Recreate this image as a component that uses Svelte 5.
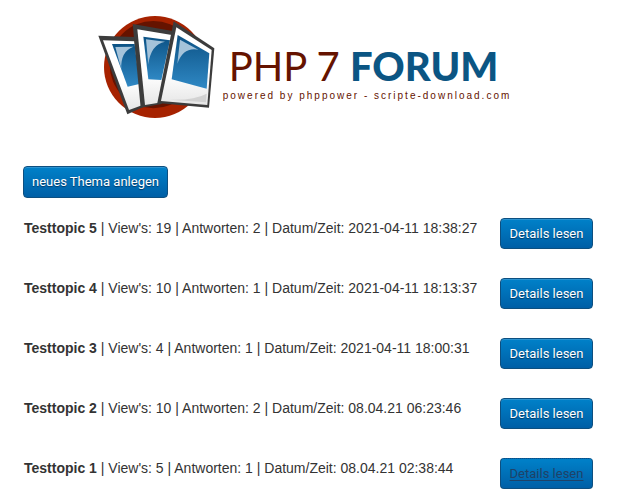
<script lang="ts">
    type Topic = {
        title: string
        views: number
        replies: number
        date: string
    }

    const topics: Topic[] = [
        { title: 'Testtopic 5', views: 19, replies: 2, date: '2021-04-11 18:38:27' },
        { title: 'Testtopic 4', views: 10, replies: 1, date: '2021-04-11 18:13:37' },
        { title: 'Testtopic 3', views: 4, replies: 1, date: '2021-04-11 18:00:31' },
        { title: 'Testtopic 2', views: 10, replies: 2, date: '08.04.21 06:23:46' },
        { title: 'Testtopic 1', views: 5, replies: 1, date: '08.04.21 02:38:44' },
    ]

    let active = 'Testtopic 1'
</script>

<main>
    <header>
        <svg class="logo" viewBox="24 21 351 312" aria-hidden="true">
            <defs>
                <linearGradient id="photo" x1="0" y1="0" x2="0" y2="1">
                    <stop offset="0" stop-color="#0c5285" />
                    <stop offset="1" stop-color="#2f88c4" />
                </linearGradient>
                <linearGradient id="glare" x1="0" y1="0" x2="0.5" y2="1">
                    <stop offset="0" stop-color="#a5c3da" />
                    <stop offset="0.6" stop-color="#a5c3da" />
                    <stop offset="1" stop-color="#5b9bc8" />
                </linearGradient>
                <linearGradient id="paper" x1="0" y1="0" x2="0" y2="1">
                    <stop offset="0.6" stop-color="#ffffff" />
                    <stop offset="1" stop-color="#e6e6e6" />
                </linearGradient>
            </defs>

            <circle cx="195" cy="177" r="153" fill="#a62200" />
            <circle cx="190" cy="170" r="131" fill="#651300" />

            <path d="M25 83 L133 87 L160 297 L112 319 Z" fill="#3c3c3c" />
            <path d="M39 97 L133 100 L156 292 L117 306 Z" fill="url(#paper)" />
            <path d="M66 108 L134 108 L148 228 L113 236 Z" fill="url(#photo)" />
            <path d="M76 117 L130 116 Q91 130 94 184 Z" fill="url(#glare)" />

            <path d="M128 48 L252 70 L215 288 L152 299 Z" fill="#3c3c3c" />
            <path d="M142 64 L250 82 L207 284 L165 291 Z" fill="url(#paper)" />
            <path d="M160 86 L240 97 L214 216 L175 214 Z" fill="url(#photo)" />
            <path d="M168 94 L225 101 Q182 109 175 170 Z" fill="url(#glare)" />

            <path d="M251 40 L373 121 L357 299 L202 285 Z" fill="#3c3c3c" />
            <path d="M259 58 L365 126 L352 291 L213 279 Z" fill="url(#paper)" />
            <path d="M263 81 L358 136 L350 242 L245 214 Z" fill="url(#photo)" />
            <path d="M270 95 L325 125 Q280 116 262 167 Z" fill="url(#glare)" />
            <path d="M240 275 Q310 278 350 257 L348 283 Z" fill="#d2d2d2" />
        </svg>
        <div class="brand">
            <h1>PHP 7 <b>FORUM</b></h1>
            <p>powered by phppower - scripte-download.com</p>
        </div>
    </header>

    <button class="btn new-topic">neues Thema anlegen</button>

    <ul>
        {#each topics as topic}
            <li>
                <span><b>{ topic.title }</b> | View's: { topic.views } | Antworten: { topic.replies } | Datum/Zeit: { topic.date }</span>
                <a class="btn" class:active={ topic.title === active } href="#details">Details lesen</a>
            </li>
        {/each}
    </ul>
</main>

<style>
    :global(body) {
        background-color: white;
    }

    main {
        padding: 15px 29px 15px 23px;
        color: #333;
        font-family: 'Liberation Sans', Arial, sans-serif;
        font-size: 14px;
        line-height: 20px;
    }

    header {
        display: flex;
        justify-content: center;
        gap: 8px;
        margin-bottom: 47px;
        padding-right: 7px;
    }

    .logo {
        flex: none;
        width: 117px;
        height: 104px;
    }

    .brand {
        padding-top: 28px;
        color: #651300;
        white-space: nowrap;
    }

    h1 {
        margin: 0;
        padding-left: 6px;
        font-family: Lato, sans-serif;
        font-size: 40px;
        font-weight: 400;
        line-height: 46px;
    }

    h1 b {
        color: #0b5583;
        font-weight: 900;
    }

    p {
        margin: 0;
        font-size: 10px;
        line-height: 14px;
        letter-spacing: 2px;
    }

    .btn {
        display: inline-block;
        flex: none;
        box-sizing: border-box;
        min-width: 93px;
        padding: 5px 8px;
        border: 1px solid #0d4f80;
        border-radius: 4px;
        background-image: linear-gradient(#0081c9, #005fa6);
        box-shadow: inset 0 1px 0 #2d93d0;
        color: white;
        font-family: Roboto, sans-serif;
        font-size: 13px;
        line-height: 19px;
        text-align: center;
        text-decoration: none;
        text-shadow: 0 1px 1px #003a66;
        cursor: pointer;
    }

    .btn.active {
        border-top-style: dotted;
        box-shadow: none;
        color: #1f4268;
        text-decoration: underline;
        text-decoration-skip-ink: none;
        text-underline-offset: 2px;
        text-shadow: none;
    }

    .new-topic {
        display: block;
        line-height: 20px;
    }

    ul {
        display: grid;
        gap: 29px;
        margin: 20px 0 0;
        padding: 0;
        list-style: none;
    }

    li {
        display: flex;
        align-items: flex-start;
        justify-content: space-between;
        padding-left: 1px;
    }
</style>
